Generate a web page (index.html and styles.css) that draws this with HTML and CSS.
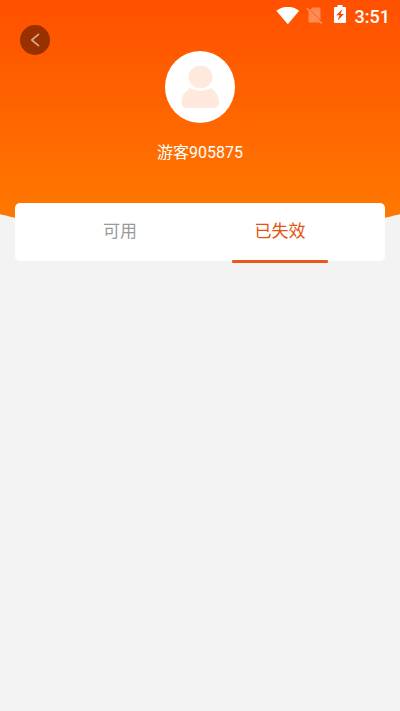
FILE: index.html
```html
<!DOCTYPE html>
<html lang="zh-CN">
<head>
<meta charset="utf-8">
<meta name="viewport" content="width=device-width, initial-scale=1">
<title>优惠券</title>
<link rel="stylesheet" href="styles.css">
</head>
<body>
<header class="hero">
  <div class="status">
    <svg class="wifi" viewBox="0 0 24 18" aria-hidden="true"><path d="M.3 3.800C7-1.500 16.500-1.500 23.200 3.800L11.800 17.300Z" fill="#fff"/></svg>
    <svg class="sim" viewBox="0 0 18 18" aria-hidden="true"><path d="M6.500 .5H13q1.500 0 1.500 1.500V13L4 2.800ZM2.500 4L14 15.500H4Q2.500 15.500 2.500 14Z" fill="#fff" fill-opacity=".32"/><path d="M.8 1.200L16 16.500" stroke="#fff" stroke-opacity=".4" stroke-width="1.300"/></svg>
    <svg class="battery" viewBox="0 0 12 18" aria-hidden="true"><path d="M3.500 0H8.500V2H11Q12 2 12 3V17Q12 18 11 18H1Q0 18 0 17V3Q0 2 1 2H3.500Z" fill="#fff"/><path d="M8.300 4.300L2.200 10.300H5.600L3.600 15.700L9.900 9H6.600Z" fill="#f04800"/></svg>
    <time class="clock">3:51</time>
  </div>
  <button class="back" type="button" aria-label="返回">
    <svg viewBox="0 0 30 30" aria-hidden="true"><path d="M18.500 9.300L11.800 15L18.500 20.700" fill="none" stroke="#d9a58c" stroke-width="1.700" stroke-linecap="round" stroke-linejoin="round"/></svg>
  </button>
  <div class="profile">
    <svg class="avatar" viewBox="0 0 70 72" aria-hidden="true">
      <ellipse cx="35" cy="36" rx="35" ry="36" fill="#fff"/>
      <ellipse cx="35.500" cy="26" rx="12" ry="11.300" fill="#ffe8dc"/>
      <path d="M25 37Q35.500 43 46 37C51 40.500 54 45.500 54 51Q54 57 48 57H22.500Q16.500 57 16.500 51C16.500 45.500 20 40.500 25 37Z" fill="#ffe8dc"/>
    </svg>
    <h1 class="name">游客905875</h1>
  </div>
</header>
<main>
  <div class="tabs" role="tablist">
    <button class="tab" type="button" role="tab" aria-selected="false">可用</button>
    <button class="tab active" type="button" role="tab" aria-selected="true">已失效</button>
  </div>
</main>
</body>
</html>
```
FILE: styles.css
```css
* {
  box-sizing: border-box;
}

body {
  margin: 0;
  min-height: 100vh;
  background: #f3f3f3;
  font-family: Roboto, "Noto Sans CJK SC", sans-serif;
  overflow-x: hidden;
}

.hero {
  position: relative;
  overflow: hidden;
  height: 237px;
  color: #fff;
  isolation: isolate;
}

/* Wide ellipse that gives the header its curved lower edge */
.hero::before {
  content: "";
  position: absolute;
  z-index: -1;
  inset: 0 -50%;
  border-radius: 0 0 50% 50% / 0 0 170px 170px;
  background: linear-gradient(#ff5000, #ff7800 218px);
}

.status {
  display: flex;
  justify-content: flex-end;
  align-items: center;
  height: 32px;
  padding-right: 10px;
}

.wifi {
  width: 24px;
  height: 18px;
  margin-right: 6px;
}

.sim {
  width: 18px;
  height: 18px;
  margin-right: 10px;
}

.battery {
  width: 12px;
  height: 18px;
  margin: 0 9px 4px 0;
}

.clock {
  font-size: 18px;
  font-weight: 500;
  line-height: 32px;
  padding-top: 2px;
}

.back {
  position: absolute;
  top: 25px;
  left: 20px;
  width: 30px;
  height: 30px;
  padding: 0;
  border: 0;
  border-radius: 50%;
  background: #993000;
}

.back svg {
  display: block;
}

.profile {
  display: flex;
  flex-direction: column;
  align-items: center;
  gap: 18px;
  padding-top: 19px;
}

.avatar {
  width: 70px;
  height: 72px;
}

.name {
  margin: 0;
  font-size: 16px;
  font-weight: 400;
  line-height: 24px;
}

.tabs {
  position: relative;
  display: flex;
  height: 58px;
  margin: -34px 15px 0;
  padding: 0 25px;
  border-radius: 5px;
  background: #fff;
}

.tab {
  position: relative;
  flex: 1;
  padding: 0 0 6px;
  border: 0;
  background: none;
  color: #999;
  font: inherit;
  font-size: 17px;
}

.active {
  color: #e4530f;
}

.active::after {
  content: "";
  position: absolute;
  bottom: -2px;
  left: 20%;
  width: 60%;
  height: 3px;
  border-radius: 1px;
  background: #e9591c;
}
```
